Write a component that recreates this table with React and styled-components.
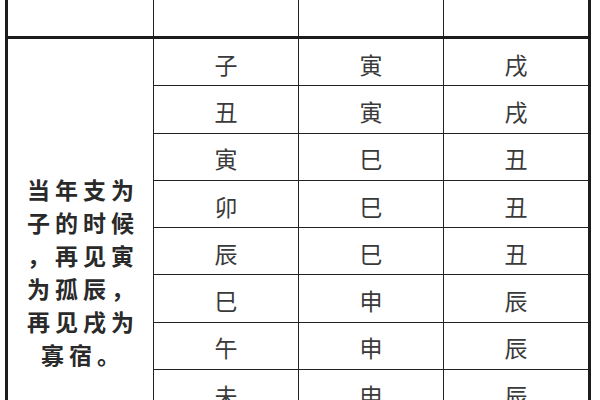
import React from 'react';
import styled, { createGlobalStyle } from 'styled-components';

const GlobalStyle = createGlobalStyle`
  html, body {
    margin: 0;
    padding: 0;
    background: #ffffff;
    overflow: hidden;
  }
  body {
    font-family: "Noto Sans CJK SC", "Noto Sans", sans-serif;
  }
`;

const Page = styled.div`
  width: 600px;
  height: 400px;
  overflow: hidden;
  padding-left: 5px;
  box-sizing: border-box;
`;

const Grid = styled.table`
  margin-top: -60px;
  width: 583px;
  border-collapse: collapse;
  table-layout: fixed;
  border: 3px solid #1c1c1c;
`;

const HeadCell = styled.th`
  height: 56px;
  padding: 0 0 37px;
  vertical-align: bottom;
  font-size: 18px;
  line-height: 20px;
  font-weight: 400;
  color: #aaa;
  letter-spacing: 3px;
  border: 1.5px solid #222;
  border-bottom: 3px solid #1c1c1c;
`;

const NoteCell = styled.td`
  vertical-align: top;
  padding: 134px 0 0 5px;
  border: 1.5px solid #222;
  text-align: center;
  font-size: 23px;
  font-weight: 700;
  line-height: 33px;
  letter-spacing: 5px;
  color: #2a2a2a;
`;

const NoteLine = styled.span`
  display: block;
  white-space: nowrap;
`;

const Cell = styled.td`
  height: 43.3px;
  padding: 3px 0 0;
  text-align: center;
  vertical-align: middle;
  font-size: 23px;
  line-height: 30px;
  font-weight: 400;
  color: #3a3a3a;
  border: 1.5px solid #222;
`;

const rows = [
  ['子', '寅', '戌'],
  ['丑', '寅', '戌'],
  ['寅', '巳', '丑'],
  ['卯', '巳', '丑'],
  ['辰', '巳', '丑'],
  ['巳', '申', '辰'],
  ['午', '申', '辰'],
  ['未', '申', '辰'],
  ['申', '亥', '未'],
  ['酉', '亥', '未'],
  ['戌', '亥', '未'],
  ['亥', '寅', '戌'],
];

const note = ['当年支为', '子的时候', '，再见寅', '为孤辰，', '再见戌为', '寡宿。'];

export default function App() {
  return (
    <Page>
      <GlobalStyle />
      <Grid>
        <colgroup>
          <col style={{ width: '147px' }} />
          <col style={{ width: '145px' }} />
          <col style={{ width: '145px' }} />
          <col style={{ width: '146px' }} />
        </colgroup>
        <thead>
          <tr>
            <HeadCell>孤辰寡宿查法</HeadCell>
            <HeadCell>年支</HeadCell>
            <HeadCell>孤辰</HeadCell>
            <HeadCell>寡宿</HeadCell>
          </tr>
        </thead>
        <tbody>
          {rows.map((r, i) => (
            <tr key={i}>
              {i === 0 && (
                <NoteCell rowSpan={rows.length}>
                  {note.map((line) => (
                    <NoteLine key={line}>{line}</NoteLine>
                  ))}
                </NoteCell>
              )}
              {r.map((v, j) => (
                <Cell key={j}>{v}</Cell>
              ))}
            </tr>
          ))}
        </tbody>
      </Grid>
    </Page>
  );
}
